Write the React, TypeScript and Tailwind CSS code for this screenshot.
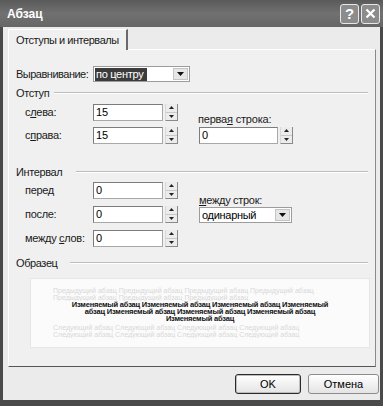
import React from "react";

const font = "font-['Liberation_Sans',Arial,sans-serif]";

const Up = () => (
  <svg width="5" height="3" viewBox="0 0 5 3">
    <path d="M2.5 0L5 3H0z" fill="#222" />
  </svg>
);

const Down = () => (
  <svg width="5" height="3" viewBox="0 0 5 3">
    <path d="M0 0H5L2.5 3z" fill="#222" />
  </svg>
);

const Spin = () => (
  <div className="flex flex-col w-[13px] h-[17px] ml-[2px] border-r border-b border-[#8a8a8a] border-l border-l-[#d8d8d8]">
    <div className="flex-1 flex items-center justify-center bg-[#ececec] border-b border-[#c8c8c8]">
      <Up />
    </div>
    <div className="flex-1 flex items-center justify-center bg-[#ececec]">
      <Down />
    </div>
  </div>
);

const Field = ({ value, w }: { value: string; w: string }) => (
  <div className={`${w} h-[17px] bg-white border border-[#a8a8a8] border-t-[#7c7c7c] border-l-[#7c7c7c] flex items-center pl-[2px] text-[11px] text-black`}>
    {value}
  </div>
);

const Combo = ({ value, w, selected }: { value: string; w: string; selected?: boolean }) => (
  <div className={`${w} h-[16px] bg-white border border-[#9c9c9c] flex items-stretch text-[11px] tracking-[-0.3px]`}>
    <div className="flex-1 flex items-center p-[1px]">
      {selected ? (
        <span className="bg-[#3c3c3c] text-white leading-[13px] px-[1px] pr-[4px]">{value}</span>
      ) : (
        <span className="text-black leading-[13px] pl-[1px]">{value}</span>
      )}
    </div>
    <div className="w-[15px] m-[1px] flex items-center justify-center bg-[#e6e6e6] border border-[#c4c4c4]">
      <svg width="7" height="4" viewBox="0 0 7 4">
        <path d="M0 0H7L3.5 4z" fill="#111" />
      </svg>
    </div>
  </div>
);

const Group = ({ title, line }: { title: string; line: string }) => (
  <div className="flex items-center h-[12px] pl-[7px] pr-[7px]">
    <span className="text-[11px] tracking-[-0.4px] text-[#1a1a1a] leading-[12px]">{title}</span>
    <div className={`flex-1 ${line} border-t border-[#bcbcbc] border-b border-b-white`} />
  </div>
);

const Row = ({ label, value }: { label: React.ReactNode; value: string }) => (
  <div className="flex items-center h-[17px]">
    <div className="w-[68px] text-[11px] tracking-[-0.3px] text-[#1a1a1a] whitespace-nowrap">{label}</div>
    <Field value={value} w="w-[70px]" />
    <Spin />
  </div>
);

const prev =
  "Предыдущий абзац Предыдущий абзац Предыдущий абзац Предыдущий абзац Предыдущий абзац Предыдущий абзац Предыдущий абзац";
const cur =
  "Изменяемый абзац Изменяемый абзац Изменяемый абзац Изменяемый абзац Изменяемый абзац Изменяемый абзац Изменяемый абзац Изменяемый абзац";
const next =
  "Следующий абзац Следующий абзац Следующий абзац Следующий абзац Следующий абзац Следующий абзац Следующий абзац Следующий абзац";

export default function App() {
  return (
    <div className={`${font} w-[383px] h-[406px] bg-[#4a4a4a] flex flex-col`}>
      {/* title bar */}
      <div className="h-[27px] flex items-center pl-[7px] pr-[3px] bg-gradient-to-b from-[#5a5a5a] via-[#717171] to-[#666666]">
        <span className="text-white font-bold text-[12px] flex-1">Абзац</span>
        <div className="flex gap-[2px]">
          <div className="w-[19px] h-[20px] rounded-[3px] border border-[#e8e8e8] bg-[#8c8c8c] flex items-center justify-center text-white font-bold text-[15px] leading-none">
            ?
          </div>
          <div className="w-[19px] h-[20px] rounded-[3px] border border-[#e8e8e8] bg-[#8c8c8c] flex items-center justify-center">
            <svg width="11" height="11" viewBox="0 0 11 11">
              <path d="M1.5 1.5L9.5 9.5M9.5 1.5L1.5 9.5" stroke="#fff" strokeWidth="2.2" />
            </svg>
          </div>
        </div>
      </div>

      {/* body */}
      <div className="flex-1 mx-[3px] mb-[6px] bg-[#ebebeb] flex flex-col">
        <div className="pt-[2px] pl-[5px] flex">
          <div className="h-[21px] -mb-[1px] relative px-[7px] flex items-center bg-[#f0f0f0] border-t border-l border-white border-r-2 border-r-[#6a6a6a] text-[11px] tracking-[-0.45px] text-[#1a1a1a]">
            Отступы и интервалы
          </div>
        </div>

        <div className="ml-[5px] mr-[4px] h-[318px] bg-[#f0f0f0] border-t border-l border-white border-r border-r-[#8a8a8a] border-b border-b-[#555555] flex flex-col">
          {/* alignment */}
          <div className="mt-[16px] flex items-center h-[16px] pl-[7px]">
            <div className="w-[77px] text-[11px] tracking-[-0.5px] text-[#1a1a1a] whitespace-nowrap">Выравнивание:</div>
            <Combo value="по центру" w="w-[97px]" selected />
          </div>

          <div className="mt-[5px]">
            <Group title="Отступ" line="ml-[5px]" />
          </div>

          <div className="mt-[5px] flex pl-[16px]">
            <div className="flex flex-col gap-[6px]">
              <Row label={<>с<u>л</u>ева:</>} value="15" />
              <Row label={<>с<u>п</u>рава:</>} value="15" />
            </div>
            <div className="ml-[20px] flex flex-col justify-end">
              <div className="text-[11px] tracking-[-0.2px] text-[#1a1a1a] leading-[13px] mb-[1px]">
                перва<u>я</u> строка:
              </div>
              <div className="flex pl-[1px]">
                <Field value="0" w="w-[79px]" />
                <Spin />
              </div>
            </div>
          </div>

          <div className="mt-[22px]">
            <Group title="Интервал" line="ml-[14px]" />
          </div>

          <div className="mt-[4px] flex pl-[16px]">
            <div className="flex flex-col gap-[7px]">
              <Row label="перед" value="0" />
              <Row label="после:" value="0" />
              <Row label={<>между <u>с</u>лов:</>} value="0" />
            </div>
            <div className="ml-[21px] pt-[12px] flex flex-col">
              <div className="text-[11px] tracking-[-0.3px] text-[#1a1a1a] leading-[13px]">
                <u>м</u>ежду строк:
              </div>
              <Combo value="одинарный" w="w-[93px]" />
            </div>
          </div>

          <div className="mt-[10px]">
            <Group title="Образец" line="ml-[12px]" />
          </div>

          <div className="mt-[9px] ml-[21px] mr-[5px] h-[70px] bg-[#fbfbfb] border border-[#e6e6e6] flex flex-col pt-[8px] overflow-hidden">
            <div className="ml-[22px] w-[262px] h-[14px] overflow-hidden text-[7px] leading-[7px] text-[#d8d8d8]">
              {prev}
            </div>
            <div className="mx-auto w-[262px] h-[21px] text-center text-[7.5px] leading-[7px] font-bold text-[#111] tracking-[-0.2px]">
              {cur}
            </div>
            <div className="mt-[2px] ml-[22px] w-[285px] h-[14px] overflow-hidden text-[7px] leading-[7px] text-[#d8d8d8]">
              {next}
            </div>
          </div>
        </div>

        {/* buttons */}
        <div className="mt-[7px] flex justify-end gap-[7px] pr-[1px]">
          <div className="w-[66px] h-[20px] rounded-[3px] border border-[#2a2a2a] bg-gradient-to-b from-white to-[#e4e4e4] flex items-center justify-center text-[11px] text-black shadow-[inset_0_0_0_1px_#bdbdbd]">
            OK
          </div>
          <div className="w-[71px] h-[20px] rounded-[3px] border border-[#8c8c8c] bg-gradient-to-b from-white to-[#e4e4e4] flex items-center justify-center text-[11px] text-black">
            Отмена
          </div>
        </div>
      </div>
    </div>
  );
}
